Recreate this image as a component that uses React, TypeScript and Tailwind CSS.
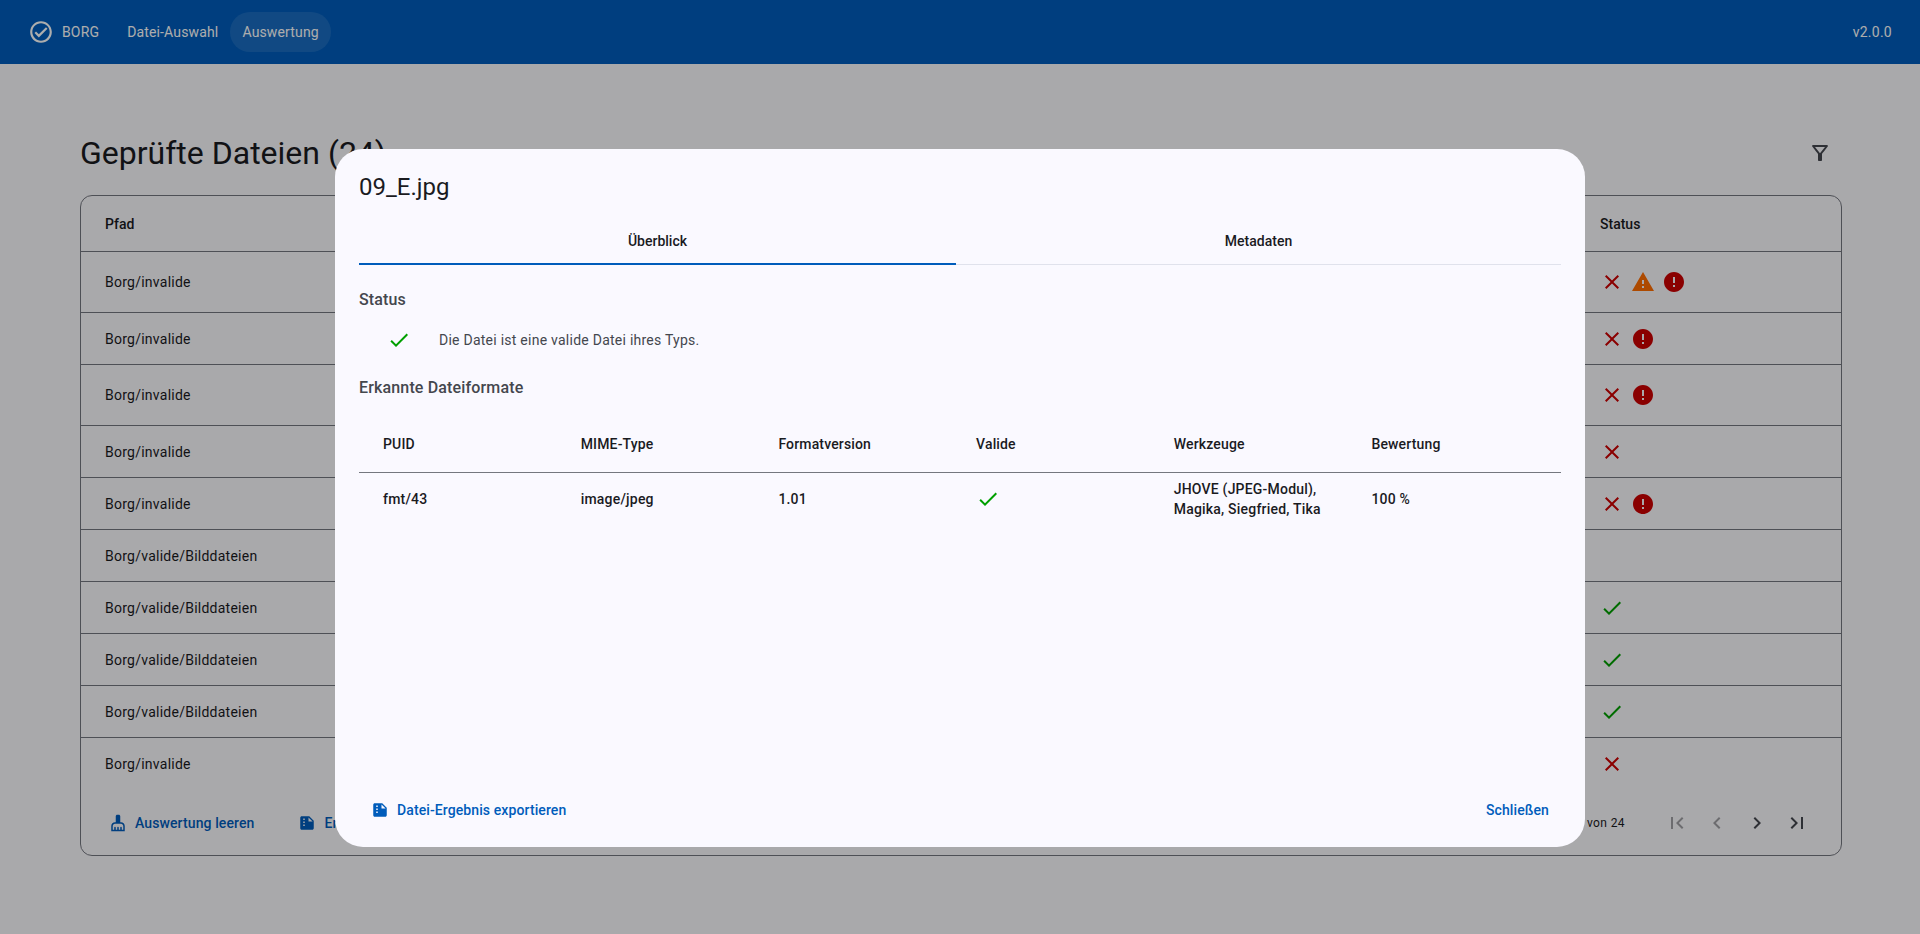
import { ReactNode } from 'react';

const PATHS = {
  checkCircle: 'M12 2C6.48 2 2 6.48 2 12s4.48 10 10 10 10-4.48 10-10S17.52 2 12 2zm0 18c-4.41 0-8-3.59-8-8s3.59-8 8-8 8 3.59 8 8-3.59 8-8 8zm4.59-12.42L10 14.17l-2.59-2.58L6 13l4 4 8-8z',
  filter: 'M7 6h10l-5.01 6.3L7 6zm-2.75-.39C6.27 8.2 10 13 10 13v6c0 .55.45 1 1 1h2c.55 0 1-.45 1-1v-6s3.73-4.8 5.75-7.39C20.26 4.95 19.79 4 18.95 4H5.04c-.83 0-1.3.95-.79 1.61z',
  close: 'M19 6.41 17.59 5 12 10.59 6.41 5 5 6.41 10.59 12 5 17.59 6.41 19 12 13.41 17.59 19 19 17.59 13.41 12z',
  warning: 'M1 21h22L12 2 1 21zm12-3h-2v-2h2v2zm0-4h-2v-4h2v4z',
  error: 'M12 2C6.48 2 2 6.48 2 12s4.48 10 10 10 10-4.48 10-10S17.52 2 12 2zm1 15h-2v-2h2v2zm0-4h-2V7h2v6z',
  check: 'M9 16.17 4.83 12l-1.42 1.41L9 19 21 7l-1.41-1.41z',
  broom: 'M16 11h-1V3c0-1.1-.9-2-2-2h-2c-1.1 0-2 .9-2 2v8H8c-2.76 0-5 2.24-5 5v7h18v-7c0-2.76-2.24-5-5-5zm3 10h-2v-3c0-.55-.45-1-1-1s-1 .45-1 1v3h-2v-3c0-.55-.45-1-1-1s-1 .45-1 1v3H9v-3c0-.55-.45-1-1-1s-1 .45-1 1v3H5v-5c0-1.65 1.35-3 3-3h8c1.65 0 3 1.35 3 3v5z',
  // page with a folded corner and a dotted line on the left
  file: 'M5 3h10l6 6v10c0 1.1-.9 2-2 2H5c-1.1 0-2-.9-2-2V5c0-1.1.9-2 2-2zM7 6v2h2V6zm0 4v2h2v-2zm0 4v2h2v-2zm7-9.5V10h5.5z',
  first: 'M18.41 16.59 13.82 12l4.59-4.59L17 6l-6 6 6 6zM6 6h2v12H6z',
  prev: 'M15.41 7.41 14 6l-6 6 6 6 1.41-1.41L10.83 12z',
  next: 'M10 6 8.59 7.41 13.17 12l-4.58 4.59L10 18l6-6z',
  last: 'M5.59 7.41 10.18 12l-4.59 4.59L7 18l6-6-6-6zM16 6h2v12h-2z',
};

const Icon = ({ d, className }: { d: string; className?: string }) => (
  <svg viewBox="0 0 24 24" className={`shrink-0 fill-current ${className ?? 'w-6 h-6'}`}>
    <path fillRule="evenodd" d={d} />
  </svg>
);

type Status = 'close' | 'warning' | 'error' | 'check';

const rows: { path: string; status: Status[]; tall?: boolean }[] = [
  { path: 'Borg/invalide', status: ['close', 'warning', 'error'], tall: true },
  { path: 'Borg/invalide', status: ['close', 'error'] },
  { path: 'Borg/invalide', status: ['close', 'error'], tall: true },
  { path: 'Borg/invalide', status: ['close'] },
  { path: 'Borg/invalide', status: ['close', 'error'] },
  { path: 'Borg/valide/Bilddateien', status: [] },
  { path: 'Borg/valide/Bilddateien', status: ['check'] },
  { path: 'Borg/valide/Bilddateien', status: ['check'] },
  { path: 'Borg/valide/Bilddateien', status: ['check'] },
  { path: 'Borg/invalide', status: ['close'] },
];

const StatusIcon = ({ type }: { type: Status }) => {
  if (type === 'close') return <Icon d={PATHS.close} className="w-6 h-6 text-[#cc0000]" />;
  if (type === 'warning') return <Icon d={PATHS.warning} className="w-6 h-6 text-[#ff6d00]" />;
  if (type === 'error') return <Icon d={PATHS.error} className="w-6 h-6 text-[#cc0000]" />;
  return <Icon d={PATHS.check} className="w-6 h-6 text-[#00a000]" />;
};

const TextButton = ({ icon, children, className }: { icon: string; children: ReactNode; className?: string }) => (
  <button className={`flex items-center h-10 gap-2 text-sm font-medium tracking-[0.1px] text-[#005cbb] ${className ?? 'px-3'}`}>
    <Icon d={icon} className="w-[18px] h-[18px]" />
    {children}
  </button>
);

export default function App() {
  return (
    <div className="relative h-[934px] overflow-hidden bg-[#faf9fd] text-[#1a1b1f] font-['Roboto',sans-serif]">
      <header className="flex items-center h-16 pl-[28px] pr-7 bg-[#005cbb] text-white text-sm tracking-[0.15px]">
        <Icon d={PATHS.checkCircle} className="w-[26px] h-[26px]" />
        <span className="ml-[8px] px-0">BORG</span>
        <span className="ml-[16px] px-3 h-10 flex items-center">Datei-Auswahl</span>
        <span className="px-3 h-10 flex items-center rounded-full bg-white/10">Auswertung</span>
        <span className="ml-auto tracking-[0.25px]">v2.0.0</span>
      </header>

      <main className="pl-20 pr-[78px] pt-[67px]">
        <div className="flex items-center justify-between h-11">
          <h1 className="text-[32px] leading-10">Geprüfte Dateien (24)</h1>
          <Icon d={PATHS.filter} className="w-6 h-6 text-[#44474e] mr-[10px]" />
        </div>

        <div className="mt-[20px] h-[661px] border border-[#74777f] rounded-xl flex flex-col overflow-hidden">
          <div className="flex items-center h-14 border-b border-[#74777f] text-sm font-medium shrink-0">
            <div className="pl-6 flex-1">Pfad</div>
            <div className="w-[241px]">Status</div>
          </div>
          {rows.map((r, i) => (
            <div
              key={i}
              className={`flex items-center shrink-0 text-sm tracking-[0.25px] ${r.tall ? 'h-[61px]' : 'h-[52px]'} ${i < rows.length - 1 ? 'border-b border-[#74777f]' : ''}`}
            >
              <div className="pl-6 flex-1">{r.path}</div>
              <div className="w-[241px] flex gap-[7px]">
                {r.status.map((s, j) => <StatusIcon key={j} type={s} />)}
              </div>
            </div>
          ))}
          <div className="flex items-center mt-auto h-[64px] pl-3 pr-[24px]">
            <TextButton icon={PATHS.broom} className="px-4">Auswertung leeren</TextButton>
            <TextButton icon={PATHS.file} className="ml-3 px-4">Ergebnisse exportieren</TextButton>
            <span className="ml-auto text-xs tracking-[0.4px] mr-[32px]">1 – 10 von 24</span>
            <div className="flex">
              {[PATHS.first, PATHS.prev].map((d, i) => (
                <div key={i} className="w-10 h-10 flex items-center justify-center text-[#1a1b1f]/40"><Icon d={d} /></div>
              ))}
              {[PATHS.next, PATHS.last].map((d, i) => (
                <div key={i} className="w-10 h-10 flex items-center justify-center text-[#44474e]"><Icon d={d} /></div>
              ))}
            </div>
          </div>
        </div>
      </main>

      {/* scrim + dialog */}
      <div className="absolute inset-0 bg-black/[0.32] flex items-start justify-center">
        <div className="mt-[149px] w-[1250px] h-[698px] bg-[#faf9ff] rounded-[28px] flex flex-col px-6">
          <h2 className="pt-[22px] text-2xl leading-8">09_E.jpg</h2>
          <div className="mt-[14px] grid grid-cols-[597px_1fr] h-12 border-b border-[#e0e2ec] text-sm font-medium shrink-0">
            <div className="flex items-center justify-center pt-[2px] border-b-2 border-[#005cbb] h-12">Überblick</div>
            <div className="flex items-center justify-center">Metadaten</div>
          </div>
          <h3 className="mt-[23px] text-base leading-6 font-medium tracking-[0.15px] text-[#44474e]">Status</h3>
          <div className="flex items-center mt-[18px] h-5 text-sm tracking-[0.25px] text-[#44474e]">
            <Icon d={PATHS.check} className="w-6 h-6 ml-[28px] text-[#00a000]" />
            <span className="ml-[28px]">Die Datei ist eine valide Datei ihres Typs.</span>
          </div>
          <h3 className="mt-[26px] text-base leading-6 font-medium tracking-[0.15px] text-[#44474e]">Erkannte Dateiformate</h3>
          <div className="mt-[15px] grid grid-cols-[repeat(6,197.7px)] items-center h-[58px] pl-6 border-b border-[#74777f] text-sm font-medium tracking-[0.15px]">
            {['PUID', 'MIME-Type', 'Formatversion', 'Valide', 'Werkzeuge', 'Bewertung'].map((h) => <div key={h}>{h}</div>)}
          </div>
          <div className="grid grid-cols-[repeat(6,197.7px)] items-center h-[52px] pl-6 text-sm font-medium tracking-[0.2px]">
            <div>fmt/43</div>
            <div>image/jpeg</div>
            <div>1.01</div>
            <Icon d={PATHS.check} className="w-6 h-6 text-[#00a000]" />
            <div className="leading-5 max-w-[155px]">JHOVE (JPEG-Modul), Magika, Siegfried, Tika</div>
            <div>100 %</div>
          </div>
          <div className="mt-auto flex items-center justify-between h-10 mb-[17px]">
            <TextButton icon={PATHS.file}>Datei-Ergebnis exportieren</TextButton>
            <button className="h-10 px-3 text-sm font-medium tracking-[0.1px] text-[#005cbb]">Schließen</button>
          </div>
        </div>
      </div>
    </div>
  );
}
